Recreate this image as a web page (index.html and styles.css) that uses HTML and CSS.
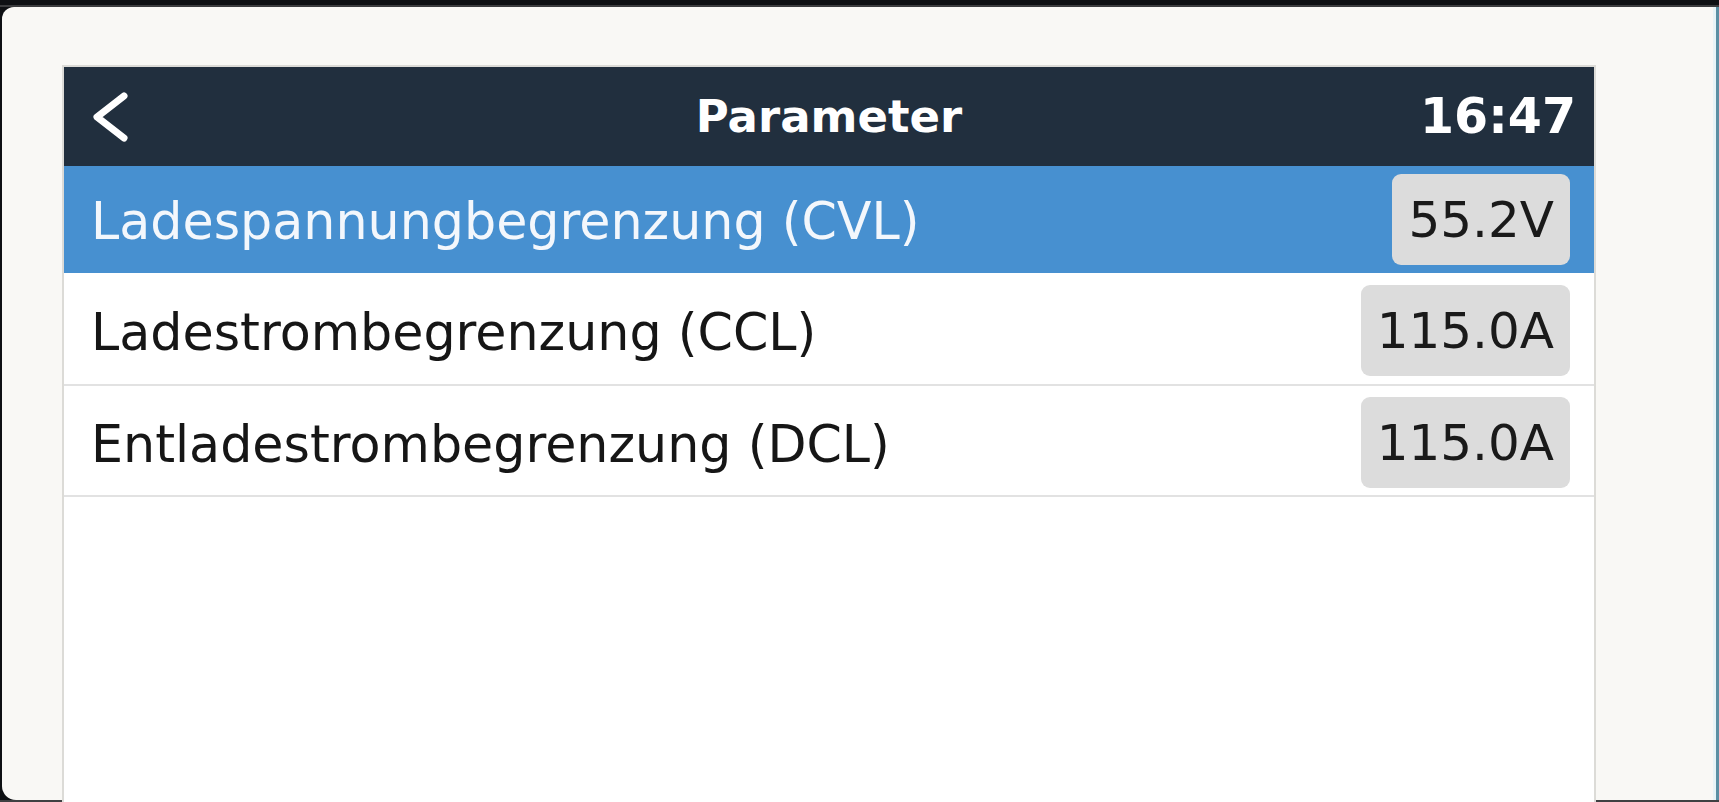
FILE: index.html
```html
<!DOCTYPE html>
<html lang="de">
<head>
<meta charset="utf-8">
<title>Parameter</title>
<link rel="stylesheet" href="styles.css">
</head>
<body>
<div class="topbar"></div>
<div class="window">
  <div class="desk">
    <div class="panel">
      <header class="header">
        <div class="back">
          <svg width="46" height="52" viewBox="0 0 46 52"><path d="M38 5 L11 26 L38 47" fill="none" stroke="#ffffff" stroke-width="7" stroke-linecap="round" stroke-linejoin="round"/></svg>
        </div>
        <div class="title">Parameter</div>
        <div class="clock">16:47</div>
      </header>
      <div class="row row-active">
        <span class="label">Ladespannungbegrenzung (CVL)</span>
        <span class="badge">55.2V</span>
      </div>
      <div class="row row-two">
        <span class="label">Ladestrombegrenzung (CCL)</span>
        <span class="badge">115.0A</span>
      </div>
      <div class="row row-three">
        <span class="label">Entladestrombegrenzung (DCL)</span>
        <span class="badge">115.0A</span>
      </div>
    </div>
  </div>
  <div class="edge"></div>
</div>
<div class="bottombar"></div>
</body>
</html>
```

FILE: styles.css
```css
html, body {
  margin: 0;
  padding: 0;
}
body {
  width: 1719px;
  height: 802px;
  overflow: hidden;
  background: #0e1013;
  font-family: "DejaVu Sans", "Liberation Sans", sans-serif;
}
.topbar {
  height: 5px;
  background: #0e1013;
  border-bottom: 2px solid #3b3c3e;
}
.window {
  display: flex;
  height: 793px;
}
.desk {
  flex: 1;
  margin-left: 2px;
  background: #f9f8f5;
  border-top-left-radius: 12px;
  border-bottom-left-radius: 14px;
  padding: 58px 0 0 60px;
  display: flex;
  align-items: flex-start;
}
.edge {
  width: 6px;
  background: linear-gradient(to right, #e8f4f7 0, #e8f4f7 3px, #5b8fa3 3px, #5b8fa3 6px);
}
.bottombar {
  height: 2px;
  background: #3f4042;
}
.panel {
  width: 1530px;
  height: 735px;
  background: #ffffff;
  border: 2px solid #dcdbd7;
  border-bottom: none;
  display: flex;
  flex-direction: column;
}
.header {
  height: 99px;
  background: #212f3e;
  display: flex;
  align-items: center;
  color: #ffffff;
  font-weight: bold;
  position: relative;
}
.back {
  width: 46px;
  height: 52px;
  margin-left: 22px;
  display: flex;
}
.title {
  position: absolute;
  left: 0;
  right: 0;
  text-align: center;
  font-size: 45px;
  pointer-events: none;
}
.clock {
  margin-left: auto;
  padding-right: 18px;
  font-size: 49px;
}
.row {
  display: flex;
  align-items: center;
  justify-content: space-between;
  padding: 0 24px 0 27px;
  color: #161616;
  box-sizing: border-box;
}
.label {
  font-size: 50.7px;
  padding-top: 3px;
}
.row-active {
  height: 107px;
  background: #4790d0;
  color: #f3f7fc;
}
.row-two {
  height: 113px;
  border-bottom: 2px solid #e2e2e2;
  padding-top: 4px;
}
.row-three {
  height: 111px;
  border-bottom: 2px solid #e2e2e2;
  padding-top: 4px;
}
.badge {
  height: 91px;
  display: flex;
  align-items: center;
  padding: 0 16px;
  font-size: 50px;
  background: #dcdcdc;
  border-radius: 9px;
  color: #1a1a1a;
}
```
